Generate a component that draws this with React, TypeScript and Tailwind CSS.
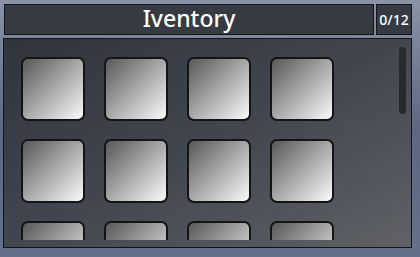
const slots = Array.from({ length: 12 }, (_, i) => i);

export default function App() {
  return (
    <div className="w-[420px] h-[257px] overflow-hidden bg-gradient-to-b from-[#8a94a6] via-[#5d6781] to-[#65708a] font-['Noto_Sans',sans-serif]">
      {/* header */}
      <div className="flex gap-[2px] pt-[4px] pl-[4px]">
        <div className="w-[370px] h-[31px] flex items-center justify-center bg-[#363a42] border border-[#121417] text-white text-[23px] font-medium leading-none pb-[2px]">
          Iventory
        </div>
        <div className="w-[36px] h-[31px] flex items-center justify-center bg-[#363a42] border border-[#121417] text-white text-[14px] font-medium leading-none">
          0/12
        </div>
      </div>

      {/* inventory panel */}
      <div className="mt-[3px] ml-[3px] w-[409px] h-[210px] flex justify-between items-start border border-[#121417] bg-gradient-to-br from-[#30343c] via-[#42464e] to-[#606267]">
        <div className="ml-[17px] mt-[18px] h-[183px] overflow-hidden">
          <div className="grid grid-cols-[repeat(4,64px)] gap-x-[19px] gap-y-[18px]">
            {slots.map(i => (
              <div
                key={i}
                className="w-16 h-16 rounded-[7px] border-2 border-[#141414] bg-gradient-to-br from-[#595959] via-[#a9a9a9] to-[#fbfbfb]"
              />
            ))}
          </div>
        </div>
        <div className="mt-[8px] mr-[5px] w-[7px] h-[67px] rounded-full bg-[#27292d]" />
      </div>
    </div>
  );
}
